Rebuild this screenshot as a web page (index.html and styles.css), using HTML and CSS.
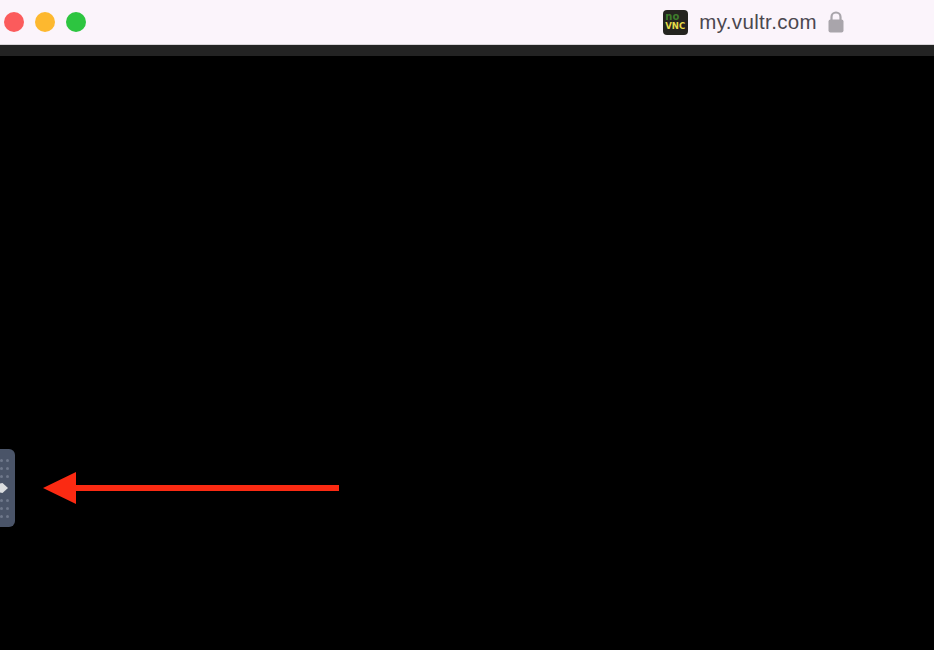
FILE: index.html
```html
<!DOCTYPE html>
<html lang="en">
  <head>
    <meta charset="UTF-8" />
    <meta name="viewport" content="width=device-width, initial-scale=1.0" />
    <title>my.vultr.com</title>
    <link rel="stylesheet" href="styles.css">
  </head>
  <body>
    <header class="titlebar">
      <div class="lights">
        <span class="light red"></span>
        <span class="light yellow"></span>
        <span class="light green"></span>
      </div>
      <div class="address">
        <div class="favicon">
          <span class="fav-no">no</span>
          <span class="fav-vnc">VNC</span>
        </div>
        <span class="host">my.vultr.com</span>
        <svg class="lock" width="16" height="22" viewBox="0 0 16 22">
          <path d="M3.5 9V6a4.5 4.5 0 0 1 9 0v3" fill="none" stroke="#a9a5ab" stroke-width="2.2" />
          <rect x="0.5" y="8.5" width="15" height="13" rx="2" fill="#a9a5ab" />
        </svg>
      </div>
    </header>
    <div class="strip"></div>

    <main class="screen">
      <!-- noVNC control bar handle -->
      <div class="handle">
        <div class="dots">
          <i></i><i></i><i></i><i></i><i></i><i></i>
        </div>
        <svg class="handle-arrow" width="9" height="12" viewBox="0 0 9 12">
          <path d="M0 1.5 L2.5 1 L8 6 L2.5 11 L0 10.5 Z" fill="#dcdee0" />
        </svg>
        <div class="dots">
          <i></i><i></i><i></i><i></i><i></i><i></i>
        </div>
      </div>

      <svg class="callout" width="298" height="34" viewBox="0 0 298 34">
        <path d="M0 17 L33 1 V14 H296 V20 H33 V33 Z" fill="#fb2a12" />
      </svg>
    </main>
  </body>
</html>
```

FILE: styles.css
```css
* {
  box-sizing: border-box;
}

html,
body {
  height: 100%;
}

body {
  margin: 0;
  display: flex;
  flex-direction: column;
  overflow: hidden;
  background: #000;
  font-family: "Liberation Sans", Arial, sans-serif;
}

.titlebar {
  height: 45px;
  padding: 0 90px 0 4px;
  display: flex;
  justify-content: space-between;
  align-items: center;
  background: #fbf4fb;
  border-bottom: 1px solid #d8d4d8;
}

.lights {
  display: flex;
  gap: 11px;
}

.light {
  width: 20px;
  height: 20px;
  border-radius: 50%;
}

.red {
  background: #fb5b5c;
}

.yellow {
  background: #fdb82f;
}

.green {
  background: #2dc540;
}

.address {
  display: flex;
  align-items: center;
}

.favicon {
  width: 25px;
  height: 25px;
  padding: 2px 2px 0;
  border-radius: 4px;
  background: #24241f;
  display: flex;
  flex-direction: column;
  font-family: "DejaVu Sans", sans-serif;
  font-weight: bold;
}

.fav-no {
  font-size: 10px;
  line-height: 10px;
  color: #3f7d2c;
}

.fav-vnc {
  font-size: 8.5px;
  line-height: 9px;
  color: #e6dc4a;
}

.host {
  margin-left: 11px;
  font-size: 20.5px;
  letter-spacing: 0.35px;
  color: #4b474f;
}

.lock {
  margin-left: 11px;
}

.strip {
  height: 11px;
  background: #232323;
}

.screen {
  flex: 1;
  position: relative;
  background: #000;
}

.handle {
  position: absolute;
  left: 0;
  top: 393px;
  width: 15px;
  height: 78px;
  padding: 10px 0 9px;
  display: flex;
  flex-direction: column;
  justify-content: space-between;
  background: #4a5468;
  border-radius: 0 6px 6px 0;
}

.dots {
  display: grid;
  grid-template-columns: 3px 3px;
  column-gap: 3px;
  row-gap: 5px;
}

.dots i {
  width: 3px;
  height: 3px;
  background: #6f788b;
  border-radius: 50%;
}

.handle-arrow {
  position: absolute;
  left: 0;
  top: 33px;
}

.callout {
  position: absolute;
  left: 43px;
  top: 415px;
}
```
